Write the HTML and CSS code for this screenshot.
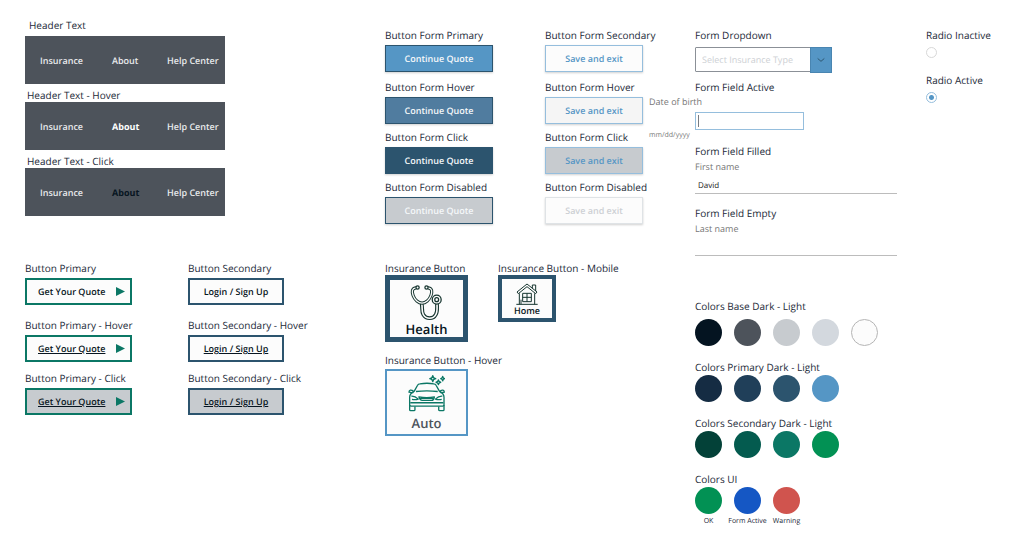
FILE: index.html
```html
<!DOCTYPE html>
<html lang="en">
<head>
<meta charset="utf-8">
<meta name="viewport" content="width=device-width, initial-scale=1">
<title>UI Components</title>
<link rel="stylesheet" href="styles.css">
</head>
<body>
<main class="sheet">
  <section class="column">
    <div class="upper headers">
      <div class="item">
        <h2 class="title title-first">Header Text</h2>
        <nav class="bar"><a href="#">Insurance</a><a href="#">About</a><a href="#">Help Center</a></nav>
      </div>
      <div class="item">
        <h2 class="title">Header Text - Hover</h2>
        <nav class="bar"><a href="#">Insurance</a><a class="is-hover" href="#">About</a><a href="#">Help Center</a></nav>
      </div>
      <div class="item">
        <h2 class="title">Header Text - Click</h2>
        <nav class="bar"><a href="#">Insurance</a><a class="is-click" href="#">About</a><a href="#">Help Center</a></nav>
      </div>
    </div>
    <div class="pair pair-cta">
      <div class="stack">
        <h2 class="title">Button Primary</h2>
        <button class="cta cta-primary">Get Your Quote<svg class="play" viewBox="0 0 9 9"><path d="M0 0 9 4.500 0 9z"/></svg></button>
        <h2 class="title">Button Primary - Hover</h2>
        <button class="cta cta-primary underlined"><span>Get Your Quote</span><svg class="play" viewBox="0 0 9 9"><path d="M0 0 9 4.500 0 9z"/></svg></button>
        <h2 class="title">Button Primary - Click</h2>
        <button class="cta cta-primary underlined pressed"><span>Get Your Quote</span><svg class="play" viewBox="0 0 9 9"><path d="M0 0 9 4.500 0 9z"/></svg></button>
      </div>
      <div class="stack">
        <h2 class="title">Button Secondary</h2>
        <button class="cta cta-secondary">Login / Sign Up</button>
        <h2 class="title">Button Secondary - Hover</h2>
        <button class="cta cta-secondary underlined"><span>Login / Sign Up</span></button>
        <h2 class="title">Button Secondary - Click</h2>
        <button class="cta cta-secondary underlined pressed"><span>Login / Sign Up</span></button>
      </div>
    </div>
  </section>

  <section class="column">
    <div class="upper pair pair-form">
      <div class="stack stack-form">
        <h2 class="title">Button Form Primary</h2>
        <button class="action primary">Continue Quote</button>
        <h2 class="title">Button Form Hover</h2>
        <button class="action primary primary-hover">Continue Quote</button>
        <h2 class="title">Button Form Click</h2>
        <button class="action primary primary-click">Continue Quote</button>
        <h2 class="title">Button Form Disabled</h2>
        <button class="action primary primary-off" disabled>Continue Quote</button>
      </div>
      <div class="stack stack-form">
        <h2 class="title">Button Form Secondary</h2>
        <button class="action secondary">Save and exit</button>
        <h2 class="title">Button Form Hover</h2>
        <button class="action secondary secondary-hover">Save and exit</button>
        <h2 class="title">Button Form Click</h2>
        <button class="action secondary secondary-click">Save and exit</button>
        <h2 class="title">Button Form Disabled</h2>
        <button class="action secondary secondary-off" disabled>Save and exit</button>
      </div>
    </div>
    <div class="pair pair-tiles">
      <div>
        <h2 class="title">Insurance Button</h2>
        <button class="tile">
          <svg class="icon-health" viewBox="0 0 100 116" fill="none" stroke="#16352f" stroke-linecap="round">
            <path stroke-width="12" d="M35 64c3 12-1 22 5 32 9 15 31 15 39 0 6-10 4-20 4-32"/>
            <path stroke="#fcfcfc" stroke-width="5" d="M35 62c3 14-1 24 5 34 9 15 31 15 39 0 6-10 4-20 4-34"/>
            <path stroke-width="10" d="M16 12C4 14 4 24 8 36c5 14 17 24 28 24s23-10 28-24c4-12 4-22-8-24"/>
            <path stroke="#fcfcfc" stroke-width="4" d="M16 12C4 14 4 24 8 36c5 14 17 24 28 24s23-10 28-24c4-12 4-22-8-24"/>
            <g fill="#fcfcfc" stroke-width="4"><circle cx="22" cy="11" r="5"/><circle cx="50" cy="11" r="5"/><circle cx="82" cy="49" r="14"/><circle cx="82" cy="49" r="6"/></g>
          </svg>
          <span>Health</span>
        </button>
      </div>
      <div>
        <h2 class="title">Insurance Button - Mobile</h2>
        <button class="tile tile-mobile">
          <svg class="icon-home" viewBox="0 0 66 66" fill="none" stroke="#16352f" stroke-width="3">
            <path d="M49 15V6h10v18M3 27 33 3l30 24-4 5-26-21-26 21zM10 31v33M56 31v33M1 64h64M15 50v14"/>
            <path d="M20 31h26v25H20zM33 31v25M20 43h26"/>
          </svg>
          <span>Home</span>
        </button>
      </div>
      <div class="tile-row">
        <h2 class="title">Insurance Button - Hover</h2>
        <button class="tile tile-hover">
          <svg class="icon-auto" viewBox="0 0 112 112" fill="none" stroke="#0b7765" stroke-width="4" stroke-linejoin="round">
            <path d="M19 49 29 31q2-4 7-4 22-4 42 0 5 0 7 4l10 18M24 50q33-4 66 0M19 49Q5 57 5 67v23q0 4 4 4h96q4 0 4-4V67q0-10-14-18"/>
            <path d="M18 52q-3-7-11-6-4 1-4 6 6 2 13 1M96 52q3-7 10-6 4 1 4 6-6 2-12 1M10 64q11-1 21 9-8 3-19 1M104 64q-11-1-21 9 8 3 19 1M33 66q24 5 47 0-2 11-9 11H43q-7 0-10-11zM37 71h39M7 84h100M5 91v14q0 3 3 3h10q3 0 3-3V95M109 91v14q0 3-3 3H96q-3 0-3-3V95"/>
            <path d="M75 2q1 8 9 9-8 1-9 9-1-8-9-9 8-1 9-9zM92 15q1 6 7 7-6 1-7 7-1-6-7-7 6-1 7-7zM105 4q1 6 6 7-5 1-6 7-1-6-6-7 5-1 6-7z"/>
          </svg>
          <span>Auto</span>
        </button>
      </div>
    </div>
  </section>

  <section class="column forms">
    <div class="dropdown">
      <label class="title" for="type">Form Dropdown</label>
      <div class="select">
        <select id="type"><option>Select Insurance Type</option></select>
        <svg viewBox="0 0 21 25"><path d="M7 11 10.500 14 14 11" fill="none" stroke="#2c546e" stroke-width="1"/></svg>
      </div>
    </div>
    <div class="active-field">
      <h2 class="title">Form Field Active</h2>
      <label class="caption birth-label" for="birth">Date of birth</label>
      <input class="birth" id="birth" type="text" aria-describedby="birth-hint">
      <span class="hint" id="birth-hint">mm/dd/yyyy</span>
    </div>
    <div class="line-field">
      <h2 class="title">Form Field Filled</h2>
      <label class="caption" for="first">First name</label>
      <input id="first" type="text" value="David">
    </div>
    <div class="line-field">
      <h2 class="title">Form Field Empty</h2>
      <label class="caption" for="last">Last name</label>
      <input id="last" type="text">
    </div>
    <div class="palette">
      <h2 class="title palette-base">Colors Base Dark - Light</h2>
      <div class="swatches"><i class="dot c-ink"></i><i class="dot c-slate"></i><i class="dot c-silver"></i><i class="dot c-mist"></i><i class="dot c-white"></i></div>
      <h2 class="title">Colors Primary Dark - Light</h2>
      <div class="swatches"><i class="dot c-navy"></i><i class="dot c-deep"></i><i class="dot c-steel"></i><i class="dot c-sky"></i></div>
      <h2 class="title">Colors Secondary Dark - Light</h2>
      <div class="swatches"><i class="dot c-forest"></i><i class="dot c-pine"></i><i class="dot c-teal"></i><i class="dot c-green"></i></div>
      <h2 class="title">Colors UI</h2>
      <div class="swatches named">
        <div><i class="dot c-green"></i><span>OK</span></div>
        <div><i class="dot c-blue"></i><span>Form Active</span></div>
        <div><i class="dot c-red"></i><span>Warning</span></div>
      </div>
    </div>
  </section>

  <section class="column radios">
    <label><span class="title">Radio Inactive</span><input type="radio" name="state"></label>
    <label><span class="title">Radio Active</span><input type="radio" name="state" checked></label>
  </section>
</main>
</body>
</html>
```
FILE: styles.css
```css
* { box-sizing: border-box; }
body {
  margin: 0;
  background: #fff;
  color: #1b2937;
  font-family: "Open Sans", "Noto Sans", sans-serif;
  font-size: 10px;
  text-rendering: geometricPrecision;
}
button, input, select { font-family: inherit; margin: 0; text-rendering: inherit; }
button { padding: 0; cursor: pointer; }
.sheet {
  display: grid;
  grid-template-columns: 360fr 310fr 231fr 98fr;
  padding: 18px 0 18px 25px;
}
.column { min-width: 0; }
.title {
  display: block;
  margin: 0;
  font-size: 10px;
  line-height: 14px;
  font-weight: 400;
  white-space: nowrap;
}
.upper { min-height: 243px; }

/* Header bars */
.headers .item { margin-bottom: 4px; }
.headers .title { padding-left: 2px; }
.headers .title-first { padding-left: 4px; margin-bottom: 4px; }
.bar {
  display: grid;
  grid-template-columns: 72px 55px auto;
  align-items: center;
  width: 200px;
  height: 48px;
  padding-left: 15px;
  background: #4d535b;
  font-size: 9px;
  font-weight: 600;
  white-space: nowrap;
}
.bar a { color: #e9ebed; text-decoration: none; }
.bar .is-hover { color: #fff; font-weight: 700; }
.bar .is-click { color: #071521; font-weight: 700; }

/* Paired groups */
.pair { display: grid; justify-content: start; }
.pair-cta { grid-template-columns: 163px auto; }
.pair-form { grid-template-columns: 160px auto; align-content: start; padding-top: 10px; }
.pair-tiles { grid-template-columns: 113px auto; }
.stack { display: flex; flex-direction: column; align-items: flex-start; gap: 3px; }
.cta + .title { margin-top: 6px; }
.cta:nth-of-type(1) + .title { margin-top: 10px; }
.action + .title { margin-top: 3px; }
.action:nth-of-type(1) + .title { margin-top: 5px; }

.cta {
  height: 27px;
  border: 2px solid;
  background: #fcfcfc;
  color: #071521;
  font-size: 9px;
  font-weight: 600;
}
.cta-primary {
  display: flex;
  align-items: center;
  justify-content: space-between;
  width: 107px;
  padding: 0 5px 0 11px;
  border-color: #0b7765;
}
.cta-secondary { width: 96px; border-color: #2c546e; }
.underlined span { text-decoration: underline; }
.pressed { background: #c7cbcf; }
.play { width: 9px; height: 9px; fill: #0b7765; }

.action {
  height: 27px;
  border: 1px solid;
  font-size: 9px;
  font-weight: 600;
  box-shadow: 0 1px 2px #00000030;
}
.primary { width: 108px; border-color: #2c546e; background: #5596c5; color: #f5f8fa; }
.primary-hover { background: #507c9f; }
.primary-click { background: #2c546e; }
.primary-off { background: #c7cbcf; }
.secondary { width: 98px; border-color: #95bedd; background: #fcfcfc; color: #5596c5; }
.secondary-hover { background: #f5f5f5; }
.secondary-click { background: #c7cbcf; }
.secondary-off { border-color: #dfe3e6; color: #cdd0d4; }

/* Insurance tiles */
.tile {
  display: flex;
  flex-direction: column;
  align-items: center;
  width: 83px;
  height: 67px;
  padding-top: 4px;
  border: 5px solid #2c546e;
  background: #fcfcfc;
  color: #071521;
  font-size: 13px;
  line-height: 16px;
  font-weight: 600;
}
.tile-mobile { width: 58px; height: 47px; border-width: 4px; font-size: 9px; line-height: 12px; }
.tile-row { grid-column: 1 / -1; margin-top: 11px; }
.tile-hover { margin-top: 2px; padding-top: 4px; border: 2px solid #5596c5; color: #4d535b; }
.icon-health { width: 33px; height: 38px; }
.icon-home { width: 22px; height: 22px; }
.icon-auto { width: 37px; height: 37px; margin-bottom: 3px; }

/* Form fields */
.forms { padding-top: 10px; }
.select {
  display: grid;
  grid-template-columns: 1fr 22px;
  width: 137px;
  height: 25px;
  margin: 5px 0 8px;
}
.select select {
  grid-area: 1 / 1 / 2 / 3;
  appearance: none;
  border: 1px solid #8b9097;
  border-radius: 1px;
  padding: 0 6px;
  background: #fff;
  color: #cdd0d4;
  font-size: 9px;
}
.select svg { grid-area: 1 / 2; z-index: 1; background: #5596c5; border: 1px solid #4985b1; pointer-events: none; }
.active-field { position: relative; margin-bottom: 14px; }
.caption { display: block; color: #777; font-size: 9px; line-height: 12px; }
.birth-label { position: absolute; top: 16px; left: -46px; white-space: nowrap; }
.birth {
  display: block;
  width: 109px;
  height: 18px;
  margin-top: 18px;
  padding: 0 3px;
  border: 1px solid #95bedd;
  border-radius: 0;
  background: linear-gradient(#777c82, #777c82) 2px 2px / 1px 12px no-repeat #fff;
  font-size: 8px;
}
.hint { position: absolute; top: 51px; left: -46px; color: #777; font-size: 7px; line-height: 10px; }
.line-field { margin-bottom: 12px; }
.line-field .title { margin-bottom: 3px; }
.line-field input {
  display: block;
  width: 202px;
  max-width: 100%;
  height: 21px;
  padding: 4px 3px 0;
  border: 0;
  border-bottom: 1px solid #bcbcbc;
  background: transparent;
  color: #222;
  font-size: 8px;
}

/* Palette */
.palette { margin-top: 43px; }
.swatches { display: flex; gap: 12px; padding-top: 1px; margin-bottom: 14px; }
.palette-base { margin-bottom: 5px; }
.dot { display: block; width: 27px; height: 27px; border-radius: 50%; }
.c-ink { background: #041421; }
.c-slate { background: #4d535b; }
.c-silver { background: #c7cbcf; }
.c-mist { background: #d3d8de; }
.c-white { background: #fcfcfc; border: 1px solid #b5b5b5; }
.c-navy { background: #152c43; }
.c-deep { background: #203f59; }
.c-steel { background: #2c546e; }
.c-sky { background: #5596c5; }
.c-forest { background: #034138; }
.c-pine { background: #045b4f; }
.c-teal { background: #0b7765; }
.c-green { background: #029154; }
.c-blue { background: #1557c4; }
.c-red { background: #d0544e; }
.named { margin-bottom: 0; font-size: 7px; line-height: 10px; }
.named div { display: flex; flex-direction: column; align-items: center; gap: 3px; width: 27px; white-space: nowrap; }

/* Radios */
.radios { padding-top: 10px; }
.radios label { display: block; margin-bottom: 15px; }
.radios input {
  appearance: none;
  display: block;
  width: 11px;
  height: 11px;
  margin: 5px 0 0;
  border: 1px solid #d8d8d8;
  border-radius: 50%;
  background: #fff;
}
.radios input:checked { border-color: #95bedd; background: radial-gradient(#5596c5 0 2px, #fff 3px); }
```
